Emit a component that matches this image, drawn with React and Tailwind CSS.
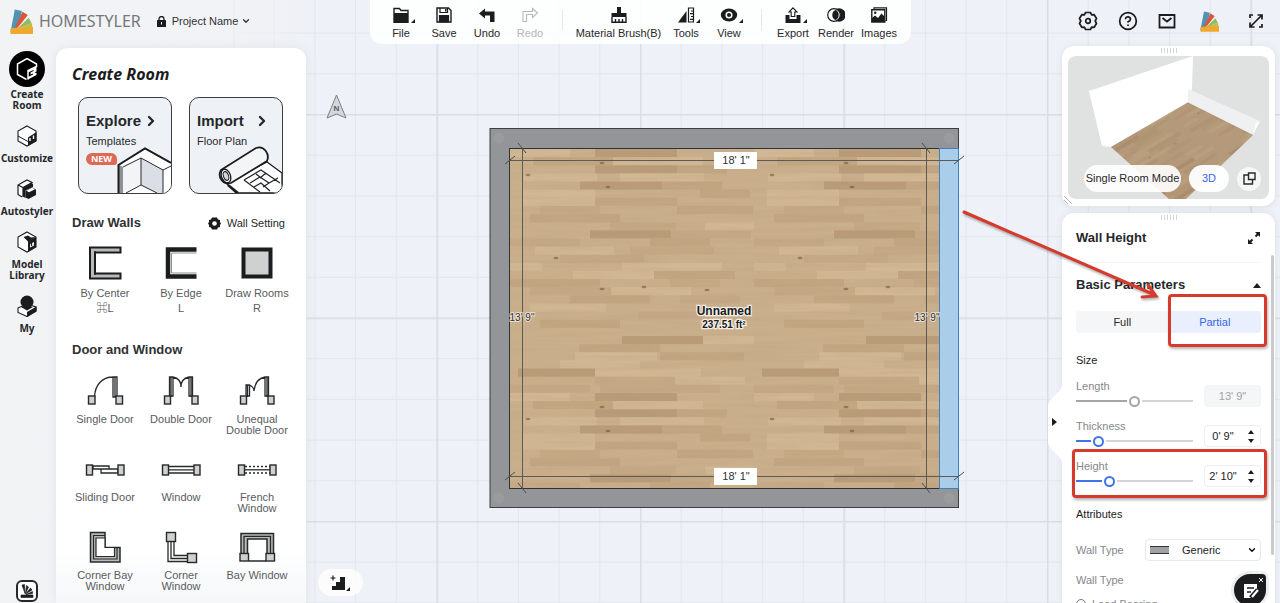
import { useState } from "react";
import { ChevronDown, ChevronRight, CircleHelp, Mail } from "lucide-react";

const TILE = 244;

// [x, row, width, shade] inside one floor tile, 30 rows per tile
const planks = [
  [85, 0, 82, "d"], [0, 0, 60, "l"], [23, 1, 80, "m"], [103, 1, 90, "l"], [85, 2, 82, "d"],
  [167, 2, 50, "m"], [14, 3, 73, "l"], [110, 3, 84, "l"], [70, 4, 82, "d"], [152, 4, 60, "m"],
  [13, 5, 72, "l"], [190, 5, 50, "m"], [13, 6, 72, "l"], [85, 6, 82, "m"], [167, 7, 76, "m"],
  [30, 7, 60, "n"], [20, 8, 90, "m"], [100, 9, 66, "n"], [195, 9, 60, "l"], [80, 10, 81, "d"],
  [161, 10, 80, "n"], [0, 11, 70, "n"], [140, 11, 60, "m"], [25, 12, 79, "l"], [120, 12, 84, "n"],
  [50, 13, 84, "n"], [0, 14, 32, "l"], [112, 14, 100, "l"], [63, 15, 81, "l"], [144, 15, 81, "m"],
  [0, 16, 90, "m"], [160, 16, 50, "n"], [20, 17, 81, "n"], [101, 17, 80, "l"], [60, 18, 80, "m"],
  [170, 18, 60, "n"], [20, 19, 76, "l"], [128, 20, 64, "n"], [30, 21, 80, "m"], [190, 21, 40, "l"],
  [112, 23, 81, "d"], [193, 23, 51, "l"], [69, 24, 81, "m"], [150, 25, 84, "m"], [65, 25, 82, "l"],
  [50, 26, 80, "l"], [8, 27, 77, "d"], [85, 27, 106, "l"], [85, 28, 80, "n"], [0, 29, 80, "n"],
  [165, 28, 70, "l"], [90, 29, 120, "n"],
];

const shades = { d: "#b39570", m: "#bea27d", n: "#c2a783", l: "#d2b995" };

const knots = [[92, 14], [18, 26], [98, 38], [46, 109], [92, 140], [134, 138], [197, 141]];

const WoodPattern = ({ id, transform }) => (
  <pattern id={id} patternUnits="userSpaceOnUse" x="510" y="149" width={TILE} height={TILE} patternTransform={transform}>
    <rect width={TILE} height={TILE} fill="#caaf8c" />
    {planks.map(([x, row, w, shade]) => (
      <rect key={`${x}-${row}`} x={x} y={row * 8.13} width={w} height="8.13" fill={shades[shade]} opacity="0.75" />
    ))}
    {knots.map(([x, y]) => (
      <ellipse key={`${x}-${y}`} cx={x} cy={y} rx="2.5" ry="1.2" fill="#6d4c2f" opacity="0.55" />
    ))}
  </pattern>
);

const Swatches = ({ className }) => (
  <svg viewBox="0 0 24 26" className={className} aria-hidden="true">
    <path d="M5 0.500L12.500 2L8 19L0.500 24Z" fill="#4f93b5" />
    <path d="M13 3L18 6L7 20L5 19Z" fill="#d9573f" />
    <path d="M13 3L18.500 6.500L8 19.500Z" fill="#d9573f" />
    <path d="M19.500 9L22.500 14.500L7 21Z" fill="#8fbb68" />
    <path d="M6 20L23 14.500V19.500L7 21.500Z" fill="#b9c04c" />
    <path d="M0.500 20L24 18.500V26H0.500Z" fill="#f0a92f" />
  </svg>
);

const Corner = () => (
  <svg viewBox="0 0 4 4" className="absolute right-2 bottom-[17px] size-1" aria-hidden="true">
    <path d="M4 0V4H0Z" fill="#1b1c1e" />
  </svg>
);

const icons = {
  File: (
    <>
      <path d="M1 6V1.500H6.500L8 3.500H15V6" fill="none" stroke="#1b1c1e" strokeWidth="1.400" />
      <path d="M0.300 6H15.700V16H0.300Z" fill="#1b1c1e" />
    </>
  ),
  Save: (
    <>
      <path d="M1 1H12.500L15 3.500V15H1Z" fill="none" stroke="#1b1c1e" strokeWidth="1.400" />
      <path d="M4 1V5.500H11.500V1M3.500 15V8.500H12.500V15Z" fill="none" stroke="#1b1c1e" strokeWidth="1.200" />
      <path d="M3.500 9H12.500V15H3.500ZM9 2H10.500V4.500H9Z" fill="#1b1c1e" />
    </>
  ),
  Undo: <path d="M0 6.500L6 1.500V4.500H15.500V15H11V8.500H6V11.500Z" fill="#1b1c1e" />,
  Redo: <path d="M15.500 6L10.500 1.500V4.500H1V14.500H4.500V7.500H10.500V10.500Z" fill="none" stroke="#b5b7ba" strokeWidth="1.100" />,
  "Material Brush(B)": (
    <>
      <path d="M6 0H10V6H15.500V10H0.500V6H6Z" fill="#1b1c1e" />
      <path d="M1 10V15.200H15V10M4.500 15V12M8 15V12M11.500 15V12" fill="none" stroke="#1b1c1e" strokeWidth="1.400" />
    </>
  ),
  Tools: (
    <>
      <path d="M8.500 4V15.500H0Z" fill="#1b1c1e" />
      <path d="M10.500 1H15.500V15H10.500ZM13 4H15M12 6.700H15M13 9.500H15M12 12.300H15" fill="none" stroke="#1b1c1e" strokeWidth="1.200" />
    </>
  ),
  View: (
    <>
      <ellipse cx="8" cy="8" rx="8.200" ry="6.500" fill="#1b1c1e" />
      <circle cx="8" cy="8" r="2.800" fill="none" stroke="#fff" strokeWidth="1.500" />
    </>
  ),
  Export: (
    <>
      <path d="M0.500 8H4.500V12H11.500V8H15.500V16H0.500Z" fill="#1b1c1e" />
      <path d="M8 0.800L12 5H9.800V9.500H6.200V5H4Z" fill="#fff" stroke="#1b1c1e" strokeWidth="1.100" />
    </>
  ),
  Render: (
    <>
      <circle cx="11" cy="8" r="6.700" fill="#1b1c1e" />
      <circle cx="6" cy="8" r="6.300" fill="#fff" stroke="#1b1c1e" strokeWidth="1.200" />
      <path d="M7.500 3A5.500 5.500 0 0 0 7.500 13A5.500 5.500 0 0 0 7.500 3Z" fill="#1b1c1e" />
    </>
  ),
  Images: (
    <>
      <path d="M3 2V0.800H15.500V13.500H14.500" fill="none" stroke="#1b1c1e" strokeWidth="1.200" />
      <path d="M0.800 2.800H13.800V15H0.800Z" fill="#fff" stroke="#1b1c1e" strokeWidth="1.400" />
      <path d="M1 11L4 8.500L7 11L10.500 6.500L13.500 9.500V15H1Z" fill="#1b1c1e" />
      <circle cx="4.200" cy="5.800" r="1.200" fill="#1b1c1e" />
    </>
  ),
};

const ToolButton = ({ label, more, wide, disabled }) => (
  <button
    type="button"
    disabled={disabled}
    className={`relative flex flex-col items-center gap-[2px] ${wide ? "w-[92px]" : "w-[43px]"} ${disabled ? "text-[#b5b7ba]" : "text-[#26282b]"}`}
  >
    <svg viewBox="-1 -1 18 18" className="size-[18px]" aria-hidden="true">{icons[label]}</svg>
    <span className="leading-[14px] whitespace-nowrap">{label}</span>
    {more && <Corner />}
  </button>
);

const Toolbar = () => (
  <div className="flex h-11 items-start rounded-b-xl bg-white/90 px-[10px] pt-[6px] text-[11px]">
    <ToolButton label="File" more />
    <ToolButton label="Save" />
    <ToolButton label="Undo" />
    <ToolButton label="Redo" disabled />
    <span className="mx-[10px] mt-1 h-5 w-px bg-gray-200" />
    <ToolButton label="Material Brush(B)" wide />
    <ToolButton label="Tools" more />
    <ToolButton label="View" more />
    <span className="mx-[10px] mt-1 h-5 w-px bg-gray-200" />
    <ToolButton label="Export" more />
    <ToolButton label="Render" />
    <ToolButton label="Images" />
  </div>
);

const Header = () => (
  <header className="grid grid-cols-[1fr_auto_1fr] items-start">
    <div className="flex h-[42px] items-center pl-[10px]">
      <Swatches className="h-[25px] w-[23px]" />
      <span className="ml-[6px] font-['Noto_Sans',sans-serif] text-base leading-6 text-[#75787b]">HOMESTYLER</span>
      <button type="button" className="ml-4 flex items-center text-[11px] text-[#303235]">
        <svg viewBox="0 0 9 11" className="mr-[6px] h-[11px] w-[9px]" aria-hidden="true">
          <path d="M2 4.500V3A2.500 2.500 0 0 1 7 3V4.500" fill="none" stroke="#1b1c1e" strokeWidth="1.300" />
          <rect y="4" width="9" height="7" rx="0.500" fill="#1b1c1e" />
          <path d="M4.500 6V8.500" stroke="#fff" />
        </svg>
        Project Name
        <ChevronDown className="ml-[3px] size-[10px]" strokeWidth={3} />
      </button>
    </div>
    <Toolbar />
    <div className="flex h-[42px] items-center justify-end pr-4 text-[#1b1c1e]">
      <button type="button" aria-label="Settings">
        <svg viewBox="0 0 20 20" className="size-5" fill="none" stroke="currentColor" strokeWidth="1.700" strokeLinejoin="round" aria-hidden="true">
          <path d="M7.600 1.500H12.400L13.600 3.800L16.200 3.700L18.500 7.500L17.200 10L18.500 12.500L16.200 16.300L13.600 16.200L12.400 18.500H7.600L6.400 16.200L3.800 16.300L1.500 12.500L2.800 10L1.500 7.500L3.800 3.700L6.400 3.800Z" />
          <circle cx="10" cy="10" r="2.300" />
        </svg>
      </button>
      <button type="button" aria-label="Help" className="ml-5"><CircleHelp className="size-5" strokeWidth={2.1} /></button>
      <button type="button" aria-label="Messages" className="ml-5">
        <svg viewBox="0 0 18 18" className="size-[18px]" fill="none" stroke="currentColor" strokeWidth="1.800" aria-hidden="true">
          <path d="M1.500 3H16.500V15.500H1.500ZM4.500 6L9 9.500L13.500 6" />
        </svg>
      </button>
      <button type="button" aria-label="Account" className="ml-6"><Swatches className="h-[21px] w-[19px]" /></button>
      <button type="button" aria-label="Full screen" className="ml-[29px]">
        <svg viewBox="0 0 16 16" className="size-4" fill="none" stroke="currentColor" strokeWidth="1.700" aria-hidden="true">
          <path d="M9.500 2H14V6.500M2 9.500V14H6.500M14 2L2 14M2 5V2H5M14 11V14H11" />
        </svg>
      </button>
    </div>
  </header>
);

const hexagon = "M11 1L20 6V16L11 21L2 16V6Z";

const navItems = [
  {
    label: "Create Room",
    active: true,
    icon: (
      <>
        <path d="M10.500 21.500L1.500 16.500V6L11 0.500L20.500 6V8.500L12 12.500V21.500" fill="none" stroke="#fff" strokeWidth="1.500" />
        <path d="M12 13L20.500 8.500V13.500L18.500 14.500L20.500 15V17L12 21.500V19L17 16.500V15.500L14.500 16.500V14.500L17.500 13V12L12 14.500Z" fill="#fff" />
      </>
    ),
  },
  {
    label: "Customize",
    icon: (
      <>
        <path d={hexagon} fill="#fff" stroke="#1b1c1e" strokeWidth="1.100" />
        <path d="M12 12.500L20.500 7V16L12 21Z" fill="#1b1c1e" />
        <path d="M2 11L12 16.500" stroke="#1b1c1e" />
        <path d="M14 13V16M17.500 10.500V14" stroke="#fff" strokeWidth="1.400" />
      </>
    ),
  },
  {
    label: "Autostyler",
    icon: (
      <>
        <path d="M6 19L2 16.500V7L11 2L16 4.500L7 9.500V19M2 7L7 9.500" fill="#fff" stroke="#1b1c1e" strokeWidth="1.200" />
        <path d="M7 9.500L15.500 5L17 6V9L9.500 12.500V20L7 18.500Z" fill="#1b1c1e" />
        <path d="M9.500 13L16 9.500L20 11.500V17L12.500 21L9.500 19.500Z" fill="#1b1c1e" />
        <path d="M10.500 12.700L16 9.800L19 11.300L13 14.300Z" fill="#fff" />
      </>
    ),
  },
  {
    label: "Model Library",
    icon: (
      <>
        <path d={hexagon} fill="#fff" stroke="#1b1c1e" strokeWidth="1.100" />
        <path d="M12 10L20 6V16L12 21Z" fill="#1b1c1e" />
        <path d="M7.500 6L12 4.500L15 6.500L20 6L12 10.500Z" fill="#1b1c1e" />
        <path d="M14 13L18 11V14.500L14 16.500Z" fill="#fff" />
        <path d="M15.500 10V15" stroke="#1b1c1e" strokeWidth="1.400" />
      </>
    ),
  },
  {
    label: "My",
    icon: (
      <>
        <path d="M2 13L11 9L20 12V16L11 21.500L2 17.500Z" fill="#fff" stroke="#1b1c1e" strokeWidth="1.100" />
        <path d="M11 17L20.500 11.500V16.500L11 22Z" fill="#1b1c1e" />
        <circle cx="11" cy="7" r="6.500" fill="#1b1c1e" />
        <path d="M5 12L11 15.500L17 12" fill="#1b1c1e" />
      </>
    ),
  },
];

const SideNav = () => (
  <nav className="flex w-[54px] shrink-0 flex-col items-center gap-[14px] pt-[7px]">
    {navItems.map(({ label, active, icon }) => (
      <button
        key={label}
        type="button"
        className={`flex w-[54px] flex-col items-center font-['Noto_Sans',sans-serif] text-[10px] leading-[11px] font-bold text-[#26282b] ${active ? "gap-[2px]" : "gap-[6px]"}`}
      >
        <span className={active ? "flex size-9 items-center justify-center rounded-full bg-black" : "block"}>
          <svg viewBox="0 0 22 22" className="size-[22px]" aria-hidden="true">{icon}</svg>
        </span>
        <span>{label}</span>
      </button>
    ))}
    <button type="button" aria-label="Homestyler" className="mt-auto mb-px flex size-[22px] items-center justify-center rounded-md border-2 border-[#26282b] bg-white">
      <svg viewBox="0 0 14 14" className="size-[14px]" aria-hidden="true">
        <path d="M1 11H13V13.500H1ZM2 1L4.500 0.500L5 9.500ZM6.500 1.500L8.500 3L5.500 9.500ZM10.500 4L12 6L5.500 10ZM12.500 7.500V9.500L6 10.500Z" fill="#1b1c1e" stroke="#1b1c1e" strokeWidth="0.600" />
      </svg>
    </button>
  </nav>
);

const post = { fill: "#cfd0d0", stroke: "#26282b", strokeWidth: 1.4 };
const line = { fill: "none", stroke: "#26282b", strokeWidth: 1.3 };

const wallTools = [
  {
    label: "By Center",
    shortcut: "⌘L",
    icon: (
      <>
        <path d="M35.500 8.500H10V29.500H35.500V34.500H5V3.500H35.500Z" fill="#b9baba" stroke="#1b1c1e" strokeWidth="2" />
        <path d="M10 7V31" stroke="#1b1c1e" strokeWidth="1.500" />
      </>
    ),
  },
  {
    label: "By Edge",
    shortcut: "L",
    icon: (
      <>
        <path d="M35.500 5.500H7V32.500H35.500" fill="none" stroke="#1b1c1e" strokeWidth="4.500" />
        <path d="M35.500 9H10.500V29H35.500" fill="none" stroke="#8d8f90" strokeWidth="1" />
      </>
    ),
  },
  { label: "Draw Rooms", shortcut: "R", icon: <rect x="6.500" y="5.500" width="27" height="27" fill="#cfd0d0" stroke="#1b1c1e" strokeWidth="4" /> },
];

const openings = [
  {
    label: "Single Door",
    icon: (
      <>
        <path d="M9.500 26C10 14 17 6 28 6M28 6H32V26H28ZM30 6V26" {...line} />
        <rect x="3.500" y="25" width="6.500" height="8" {...post} />
        <rect x="31" y="25" width="6.500" height="8" {...post} />
      </>
    ),
  },
  {
    label: "Double Door",
    icon: (
      <>
        <path d="M8.500 6H12V25H8.500ZM28 6H31.500V25H28ZM10 6V26M30 6V26M12 6C17 7 20 11 20 16C20 11 23 7 28 6" {...line} />
        <rect x="3.500" y="25" width="6" height="8" {...post} />
        <rect x="31" y="25" width="6" height="8" {...post} />
      </>
    ),
  },
  {
    label: "Unequal Double Door",
    icon: (
      <>
        <path d="M9 14H12.500V25H9ZM28 6H31.500V25H28ZM10.500 14V26M30 6V26M12 14C15 15 17 17 17 20C18 11 22 7 28 6" {...line} />
        <rect x="3.500" y="25" width="6" height="8" {...post} />
        <rect x="31" y="25" width="6" height="8" {...post} />
      </>
    ),
  },
  {
    label: "Sliding Door",
    icon: (
      <>
        <path d="M8 17H24V20H8ZM16 20H33V24H16Z" {...line} />
        <rect x="1.500" y="16" width="6" height="10" {...post} />
        <rect x="33" y="16" width="6" height="10" {...post} />
      </>
    ),
  },
  {
    label: "Window",
    icon: (
      <>
        <path d="M8 17.500H33M8 20.800H33M8 24H33" {...line} />
        <rect x="1.500" y="16" width="6" height="10" {...post} />
        <rect x="33" y="16" width="6" height="10" {...post} />
      </>
    ),
  },
  {
    label: "French Window",
    icon: (
      <>
        <path d="M8 20.800H33" {...line} />
        <path d="M8 17.500H33M8 24H33" {...line} strokeDasharray="2 2" />
        <rect x="1.500" y="16" width="6" height="10" {...post} />
        <rect x="33" y="16" width="6" height="10" {...post} />
      </>
    ),
  },
  {
    label: "Corner Bay Window",
    icon: (
      <>
        <path d="M5.500 5.500H20V20.500H35V35H5.500Z" fill="#b9baba" stroke="#26282b" strokeWidth="1.500" />
        <path d="M20 8.500H8.500V32H32V20.500" fill="none" stroke="#26282b" strokeWidth="1.200" />
        <path d="M20 11H11V29.500H29.500V20.500H20Z" fill="#fff" stroke="#26282b" strokeWidth="1.200" />
      </>
    ),
  },
  {
    label: "Corner Window",
    icon: (
      <>
        <path d="M7 14V34.500H27M10 14V31.500H27M13 14V28.500H27" {...line} />
        <rect x="5.500" y="5.500" width="9" height="9" {...post} />
        <rect x="26.500" y="26.500" width="9" height="9" {...post} />
      </>
    ),
  },
  {
    label: "Bay Window",
    icon: (
      <>
        <path d="M4 28V6.500H36.500V28H30V12H10.500V28Z" fill="#b9baba" stroke="#26282b" strokeWidth="1.500" />
        <path d="M7 28V9.300H33.500V28M12 34H29" {...line} />
        <rect x="3" y="26.500" width="8.500" height="7.500" {...post} />
        <rect x="29" y="26.500" width="8.500" height="7.500" {...post} />
      </>
    ),
  },
];

const ExploreArt = () => (
  <svg viewBox="0 0 54 46" className="absolute right-0 bottom-0 h-[46px] w-[54px]" aria-hidden="true">
    <path d="M2 46V18L28 1L54 16V46Z" fill="#fff" />
    <path d="M6 20L24 11V37L6 46Z" fill="#f2f4f6" />
    <path d="M24 11L46 23V46H40L24 38Z" fill="#dcdee5" />
    <path d="M2 18L6 20V46H2Z" fill="#8f9295" />
    <path d="M6 20L24 11V38L9 46M24 11L46 23V46M24 38L40 46M46 23L54 19" fill="none" stroke="#26282b" />
    <path d="M1.500 46V18L28 1.500L54 16" fill="none" stroke="#1b1c1e" strokeWidth="2" />
  </svg>
);

const ImportArt = () => (
  <svg viewBox="0 0 64 48" className="absolute right-0 bottom-0 h-12 w-16" aria-hidden="true">
    <path d="M8 38L18 48H64V28L49 17Z" fill="#fff" stroke="#1b1c1e" strokeWidth="1.300" />
    <path d="M3 25L38 3C46 0 52 9 49 16L13 38C5 40 -1 32 3 25Z" fill="#f4f5f7" stroke="#1b1c1e" strokeWidth="1.800" />
    <ellipse cx="8" cy="31" rx="4.500" ry="7" transform="rotate(-20 8 31)" fill="#fff" stroke="#1b1c1e" strokeWidth="1.300" />
    <ellipse cx="8" cy="31" rx="2.500" ry="4.500" transform="rotate(-20 8 31)" fill="#d5d7da" stroke="#1b1c1e" />
    <path d="M26 35L43 25L62 38M26 35L42 47M32 38L42 32L38 29M42 32L51 38L45 42M51 38L60 33M48 28L42 33M36 42L43 38L52 46" fill="none" stroke="#26282b" strokeWidth="1.300" />
    <path d="M10 40L20 48" stroke="#1b1c1e" strokeWidth="2.500" />
  </svg>
);

const TemplateCard = ({ title, subtitle, badge, children }) => (
  <a href="#" className="relative h-[97px] w-[94px] overflow-hidden rounded-[10px] border border-[#3c3f42] bg-[#eef2f6] pt-3 pl-[7px] text-[#26282b]">
    <span className="flex items-center justify-between pr-3 text-[15px] leading-[22px] font-bold">
      {title}
      <ChevronRight className="size-4" strokeWidth={3.5} />
    </span>
    <span className="block text-[11px] leading-[18px]">{subtitle}</span>
    {badge && (
      <span className="mt-[3px] block h-3 w-[31px] rounded-[6px_6px_3px_6px] bg-[#dd6a57] text-center font-['Noto_Sans',sans-serif] text-[9px] leading-3 font-bold text-white">
        {badge}
      </span>
    )}
    {children}
  </a>
);

const CatalogItem = ({ label, shortcut, icon }) => (
  <button type="button" className="flex flex-col items-center px-[5px] text-[11px] text-[#585b5e]">
    <svg viewBox="0 0 41 40" className="h-10 w-[41px]" aria-hidden="true">{icon}</svg>
    <span className={shortcut ? "mt-[2px] leading-[15px] whitespace-nowrap" : "mt-[3px] w-min min-w-16 leading-[11px]"}>{label}</span>
    {shortcut && <span className="leading-[15px]">{shortcut}</span>}
  </button>
);

const CreatePanel = () => (
  <aside className="ml-[2px] w-[250px] shrink-0 overflow-hidden rounded-t-xl bg-linear-to-b from-white from-90% to-[#f5f7f9] px-[11px] pt-4 shadow-[0_0_10px_rgba(120,130,150,0.12)]">
    <h1 className="pl-[5px] font-['Noto_Sans',sans-serif] text-base leading-5 font-bold text-[#1b1c1e] italic">Create Room</h1>
    <div className="mt-[13px] flex gap-[17px] pl-[11px]">
      <TemplateCard title="Explore" subtitle="Templates" badge="NEW">
        <ExploreArt />
      </TemplateCard>
      <TemplateCard title="Import" subtitle="Floor Plan">
        <ImportArt />
      </TemplateCard>
    </div>
    <div className="mt-[19px] flex items-center justify-between pr-[10px] pl-[5px]">
      <h2 className="text-[13px] leading-5 font-bold text-[#303235]">Draw Walls</h2>
      <button type="button" className="flex items-center gap-[6px] text-[11px] text-[#26282b]">
        <svg viewBox="0 0 13 13" className="size-[13px]" aria-hidden="true">
          <path d="M4 0.500H9L10 2.500L12 3V5L13 6.500L12 8V10L10 10.500L9 12.500H4L3 10.500L1 10V8L0 6.500L1 5V3L3 2.500Z" fill="#1b1c1e" />
          <circle cx="6.500" cy="6.500" r="2.300" fill="#fff" />
        </svg>
        Wall Setting
      </button>
    </div>
    <div className="mt-[11px] grid grid-cols-3">
      {wallTools.map((tool) => (
        <CatalogItem key={tool.label} {...tool} />
      ))}
    </div>
    <h2 className="mt-6 pl-[5px] text-[13px] leading-5 font-bold text-[#303235]">Door and Window</h2>
    <div className="mt-[11px] grid grid-cols-3 gap-y-[13px]">
      {openings.map((item) => (
        <CatalogItem key={item.label} {...item} />
      ))}
    </div>
  </aside>
);

const Tick = ({ x, y, flip }) => (
  <path d={flip ? `M${x - 4} ${y - 5}L${x + 4} ${y + 5}` : `M${x - 5} ${y + 4}L${x + 5} ${y - 4}`} stroke="#4b4d50" />
);

const FloorPlan = () => (
  <svg viewBox="0 0 1280 603" preserveAspectRatio="xMidYMid slice" className="absolute inset-0 h-full w-full font-['Liberation_Sans',sans-serif]">
    <defs>
      <pattern id="minor" patternUnits="userSpaceOnUse" x="640" y="317.500" width="40.700" height="40.700">
        <path d="M0 0H40.700M0 0V40.700" stroke="#e2e6ed" strokeWidth="2" />
      </pattern>
      <pattern id="major" patternUnits="userSpaceOnUse" x="640" y="317.500" width="203.500" height="203.500">
        <path d="M0 0H203.500M0 0V203.500" stroke="#d9dde4" strokeWidth="3" />
      </pattern>
      <WoodPattern id="wood" />
      <filter id="grain" x="0" y="0" width="1" height="1">
        <feTurbulence type="fractalNoise" baseFrequency="0.015 0.25" numOctaves="3" seed="4" />
        <feColorMatrix values="0 0 0 0 0.42  0 0 0 0 0.31  0 0 0 0 0.2  0.900 0 0 0 -0.320" />
      </filter>
      <linearGradient id="fade">
        <stop offset="0" stopColor="#f1f3f5" />
        <stop offset="0.700" stopColor="#f1f3f5" stopOpacity="0.900" />
        <stop offset="1" stopColor="#f1f3f5" stopOpacity="0" />
      </linearGradient>
    </defs>
    <rect width="1280" height="603" fill="#eef1f7" />
    <rect width="1280" height="603" fill="url(#minor)" />
    <rect width="1280" height="603" fill="url(#major)" />
    <rect width="320" height="603" fill="url(#fade)" />

    <path d="M336.500 95L346 118L336.500 114L327 118Z" fill="#d5d8db" stroke="#7c7f83" />
    <text x="336.500" y="111" textAnchor="middle" fontSize="8" fontWeight="bold" fill="#55585c">N</text>

    <rect x="490" y="128.500" width="468.500" height="379" fill="#939598" stroke="#3c3e42" />
    {[[499, 138], [949, 138], [499, 498], [949, 498]].map(([x, y]) => (
      <circle key={`${x}-${y}`} cx={x} cy={y} r="5.500" fill="#9a9b9f" />
    ))}
    <rect x="509.500" y="148.500" width="430" height="340" fill="url(#wood)" stroke="#303235" />
    <rect x="510" y="149" width="429" height="339" filter="url(#grain)" opacity="0.400" />
    <rect x="939.500" y="148.500" width="19" height="340" fill="#aacde9" stroke="#3d82bd" />

    <path d="M509.500 160.500H959M509.500 476.500H959M522.500 148V488M926.500 148V488" stroke="#5d5b57" />
    <Tick x={510} y={160} />
    <Tick x={959} y={160} />
    <Tick x={510} y={476} />
    <Tick x={959} y={476} />
    <Tick x={522} y={148} flip />
    <Tick x={926} y={148} flip />
    <Tick x={522} y={488} flip />
    <Tick x={926} y={488} flip />

    <g fontSize="11" textAnchor="middle" fill="#303235">
      <rect x="714" y="152" width="43" height="17" fill="#fff" />
      <text x="736" y="164">18' 1"</text>
      <rect x="714" y="468" width="43" height="17" fill="#fff" />
      <text x="736" y="480">18' 1"</text>
      <g stroke="#fff" strokeOpacity="0.600" strokeWidth="2" paintOrder="stroke" fontSize="10">
        <text x="522" y="321">13' 9"</text>
        <text x="927" y="321">13' 9"</text>
      </g>
      <g stroke="#fff" strokeOpacity="0.800" strokeWidth="2.500" paintOrder="stroke" fontWeight="bold" fill="#1b1c1e">
        <text x="724" y="315" fontSize="12">Unnamed</text>
        <text x="724" y="328" fontSize="10">237.51 ft²</text>
      </g>
    </g>
  </svg>
);

const Grip = () => (
  <span className="absolute top-[2px] left-1/2 flex -translate-x-1/2 gap-[2px]">
    {[0, 1, 2, 3, 4, 5].map((i) => (
      <i key={i} className="h-[5px] w-px bg-gray-300" />
    ))}
  </span>
);

const Preview = () => (
  <section aria-label="3D preview" className="relative rounded-xl bg-white px-[6px] pt-[10px] pb-[7px] shadow-[0_1px_6px_rgba(120,130,150,0.15)]">
    <Grip />
    <svg viewBox="0 0 201 143" className="block w-full rounded-lg bg-[#e0e1e1]" aria-hidden="true">
      <defs>
        <WoodPattern id="wood3d" transform="rotate(-31) skewX(24) scale(0.450)" />
      </defs>
      <path d="M21 35L125 0L124 33L120 46L43 91L34 90Z" fill="#fff" />
      <path d="M120 33L192 65L185 79L120 46Z" fill="#eef0f2" />
      <path d="M188 67L192 65L185 79Z" fill="#fff" />
      <path d="M120 46.500L185 79L118 143H101L43 91Z" fill="url(#wood3d)" />
      <path d="M120 46.500L185 79L118 143H101L43 91Z" fill="#8d7258" opacity="0.350" />
    </svg>
    <div className="absolute bottom-[14px] left-[22px] flex h-[27px] items-center gap-2 text-[11px] text-[#26282b]">
      <button type="button" className="h-full w-[97px] rounded-full bg-white/90 whitespace-nowrap">Single Room Mode</button>
      <button type="button" className="h-full w-10 rounded-full bg-white/95 text-[#3565e8]">3D</button>
      <button type="button" aria-label="Pop out" className="flex size-6 items-center justify-center rounded-full bg-white/70">
        <svg viewBox="0 0 13 13" className="size-[13px]" fill="none" stroke="#26282b" strokeWidth="1.400" aria-hidden="true">
          <path d="M5.500 1H12V7.500H5.500ZM5.500 3H1V12H9.500V7.500" />
        </svg>
      </button>
    </div>
    <svg viewBox="0 0 8 8" className="absolute bottom-[2px] left-[2px] size-2" stroke="#b9bbbe" aria-hidden="true">
      <path d="M0 0L8 8M0 4L4 8" />
    </svg>
  </section>
);

const Highlight = ({ className }) => (
  <span className={`pointer-events-none absolute z-10 rounded-[4px] border-[3px] border-[#d63a2c] shadow-[1px_2px_3px_rgba(0,0,0,0.3)] ${className}`} />
);

const SizeRow = ({ id, label, start, text, disabled, highlighted }) => {
  const [value, setValue] = useState(start);
  const color = disabled ? "#a3a5a8" : "#3f74e6";

  return (
    <div className="relative flex h-10 items-start justify-between">
      <div className="flex w-[117px] flex-col">
        <label htmlFor={id} className="text-[11px] leading-[14px] text-[#85878a]">{label}</label>
        <input
          id={id}
          type="range"
          value={value}
          disabled={disabled}
          onChange={(e) => setValue(Number(e.target.value))}
          style={{ background: `linear-gradient(to right, ${color} ${value}%, #d3d5d8 ${value}%) center / 100% 2px no-repeat` }}
          className="mt-px h-[14px] w-full appearance-none [&::-webkit-slider-thumb]:size-[11px] [&::-webkit-slider-thumb]:appearance-none [&::-webkit-slider-thumb]:rounded-full [&::-webkit-slider-thumb]:border-2 [&::-webkit-slider-thumb]:border-[#3f74e6] [&::-webkit-slider-thumb]:bg-white [&::-webkit-slider-thumb]:shadow-[0_0_0_2px_white] disabled:[&::-webkit-slider-thumb]:border-[#a3a5a8]"
        />
      </div>
      <div className={`mt-[6px] flex h-[22px] w-[57px] items-center rounded border ${disabled ? "border-gray-100 bg-[#f5f6f7]" : "border-[#eceef0] bg-white"}`}>
        <input
          aria-label={`${label} value`}
          defaultValue={text}
          disabled={disabled}
          className={`min-w-0 flex-1 text-center text-[11px] ${disabled ? "text-[#a0a2a5]" : "text-[#1b1c1e]"}`}
        />
        {!disabled && (
          <span className="flex w-[19px] flex-col items-center gap-[5px]">
            <button type="button" aria-label={`Increase ${label}`}>
              <svg viewBox="0 0 6 4" className="h-1 w-[6px]"><path d="M3 0L6 4H0Z" fill="#1b1c1e" /></svg>
            </button>
            <button type="button" aria-label={`Decrease ${label}`}>
              <svg viewBox="0 0 6 4" className="h-1 w-[6px]"><path d="M3 4L6 0H0Z" fill="#1b1c1e" /></svg>
            </button>
          </span>
        )}
      </div>
      {highlighted && <Highlight className="-top-[10px] -right-[6px] -left-1 h-[49px]" />}
    </div>
  );
};

const WallPanel = () => (
  <section className="relative mt-[7px] min-h-0 flex-1 rounded-t-xl bg-white shadow-[0_0_6px_rgba(120,130,150,0.15)]">
    <Grip />
    <button type="button" aria-label="Collapse panel" className="absolute top-[172px] -left-[14px] h-[78px] w-[14px]">
      <svg viewBox="0 0 14 78" className="h-full w-full" aria-hidden="true">
        <path d="M14 0C14 8 0 12 0 22V56C0 66 14 70 14 78Z" fill="#fff" />
        <path d="M4 33L9 37L4 41Z" fill="#1b1c1e" />
      </svg>
    </button>
    <div className="h-full overflow-hidden pr-[14px] pl-[14px]">
      <div className="flex h-[50px] items-center justify-between border-b border-gray-100">
        <h2 className="text-[13px] font-bold text-[#26282b]">Wall Height</h2>
        <button type="button" aria-label="Expand panel">
          <svg viewBox="0 0 14 14" className="size-[14px]" fill="#1b1c1e" aria-hidden="true">
            <path d="M8 1H13V6ZM1 8V13H6Z" />
            <path d="M12 2L8.500 5.500M5.500 8.500L2 12" stroke="#1b1c1e" strokeWidth="2" />
          </svg>
        </button>
      </div>
      <div className="flex h-11 items-center justify-between">
        <h3 className="text-[13px] font-bold text-[#26282b]">Basic Parameters</h3>
        <button type="button" aria-label="Collapse section">
          <svg viewBox="0 0 8 5" className="h-[5px] w-2"><path d="M4 0L8 5H0Z" fill="#1b1c1e" /></svg>
        </button>
      </div>
      <div className="mt-1 flex h-[22px] rounded bg-[#f5f6f7] text-[11px]">
        <button type="button" className="flex-1 text-[#26282b]">Full</button>
        <button type="button" className="relative flex-1 rounded bg-[#e9effd] text-[#3565e8]">
          Partial
          <Highlight className="-top-[17px] -right-[6px] h-[53px] w-[99px]" />
        </button>
      </div>
      <h4 className="mt-5 mb-3 text-[11px] leading-[14px] text-[#1b1c1e]">Size</h4>
      <SizeRow id="length" label="Length" start={50} text={`13' 9"`} disabled />
      <SizeRow id="thickness" label="Thickness" start={16} text={`0' 9"`} />
      <SizeRow id="height" label="Height" start={26} text={`2' 10"`} highlighted />
      <h4 className="mt-2 text-[11px] leading-[14px] text-[#1b1c1e]">Attributes</h4>
      <div className="mt-[18px] flex items-center justify-between text-[11px]">
        <label htmlFor="wall-type" className="text-[#85878a]">Wall Type</label>
        <div className="relative w-[116px]">
          <select id="wall-type" className="h-[22px] w-full appearance-none rounded border border-[#e6e8ea] bg-white pl-9 text-[#1b1c1e]">
            <option>Generic</option>
          </select>
          <span className="pointer-events-none absolute top-[7px] left-[5px] h-2 w-[19px] border-y border-[#303235] bg-[#a0a2a4]" />
          <ChevronDown className="pointer-events-none absolute top-[6px] right-1 size-[10px]" strokeWidth={3} />
        </div>
      </div>
      <fieldset className="mt-3 text-[11px] text-[#85878a]">
        <legend className="leading-[14px]">Wall Type</legend>
        <label className="mt-[10px] flex items-center gap-[6px] leading-[14px]">
          <input type="radio" name="bearing" className="size-[10px]" />
          Load Bearing
        </label>
      </fieldset>
    </div>
    <span className="absolute top-[42px] right-[1px] h-[300px] w-[3px] rounded-full bg-[#c8cacc]" />
    <button type="button" aria-label="Feedback" className="absolute right-[9px] -bottom-[3px] flex size-8 items-center justify-center rounded-[16px_4px_16px_16px] bg-[#1b1c1e] shadow-[0_0_0_3px_#eceef0]">
      <svg viewBox="0 0 32 32" className="size-8" fill="none" aria-hidden="true">
        <path d="M25 4L29 8M29 4L25 8" stroke="#fff" />
        <path d="M10 10H23V17L18 24H10Z" fill="#fff" />
        <path d="M13 14H20M13 18H17" stroke="#1b1c1e" strokeWidth="1.300" />
        <path d="M24 16L17 24" stroke="#1b1c1e" strokeWidth="5" />
        <path d="M24 16L18 23" stroke="#fff" strokeWidth="2.200" />
      </svg>
    </button>
    {/* callout from the selected wall to the Partial switch */}
    <svg viewBox="0 0 204 96" className="pointer-events-none absolute -top-[8px] -left-[104px] z-10 h-24 w-[204px] drop-shadow-[1px_2px_1px_rgba(0,0,0,0.3)]" fill="none" stroke="#d63a2c" strokeWidth="3" strokeLinecap="round" aria-hidden="true">
      <path d="M6 7L197 90M190 80L198 91L184 92" />
    </svg>
  </section>
);

const App = () => (
  <div className="relative flex h-screen flex-col overflow-hidden bg-[#eef1f7] font-['Liberation_Sans','Noto_Sans_CJK_SC',sans-serif]">
    <FloorPlan />
    <div className="relative flex min-h-0 flex-1 flex-col">
      <Header />
      <main className="flex min-h-0 flex-1">
        <SideNav />
        <div className="flex pt-1">
          <CreatePanel />
        </div>
        <div className="flex flex-1 items-end px-3 pb-[7px]">
          <button type="button" aria-label="Add stairs" className="flex h-[27px] w-[45px] items-center justify-center rounded-full bg-white/80">
            <svg viewBox="0 0 21 16" className="h-4 w-[21px]" aria-hidden="true">
              <path d="M2 15V11H6V7H10V2H15V15Z" fill="#1b1c1e" />
              <path d="M3 0.500V5.500M0.500 3H5.500" stroke="#1b1c1e" strokeWidth="1.200" />
              <path d="M20 12V16H16Z" fill="#1b1c1e" />
            </svg>
          </button>
        </div>
        <div className="flex w-[218px] shrink-0 flex-col pt-[2px] pr-[5px]">
          <Preview />
          <WallPanel />
        </div>
      </main>
    </div>
  </div>
);

export default App;
